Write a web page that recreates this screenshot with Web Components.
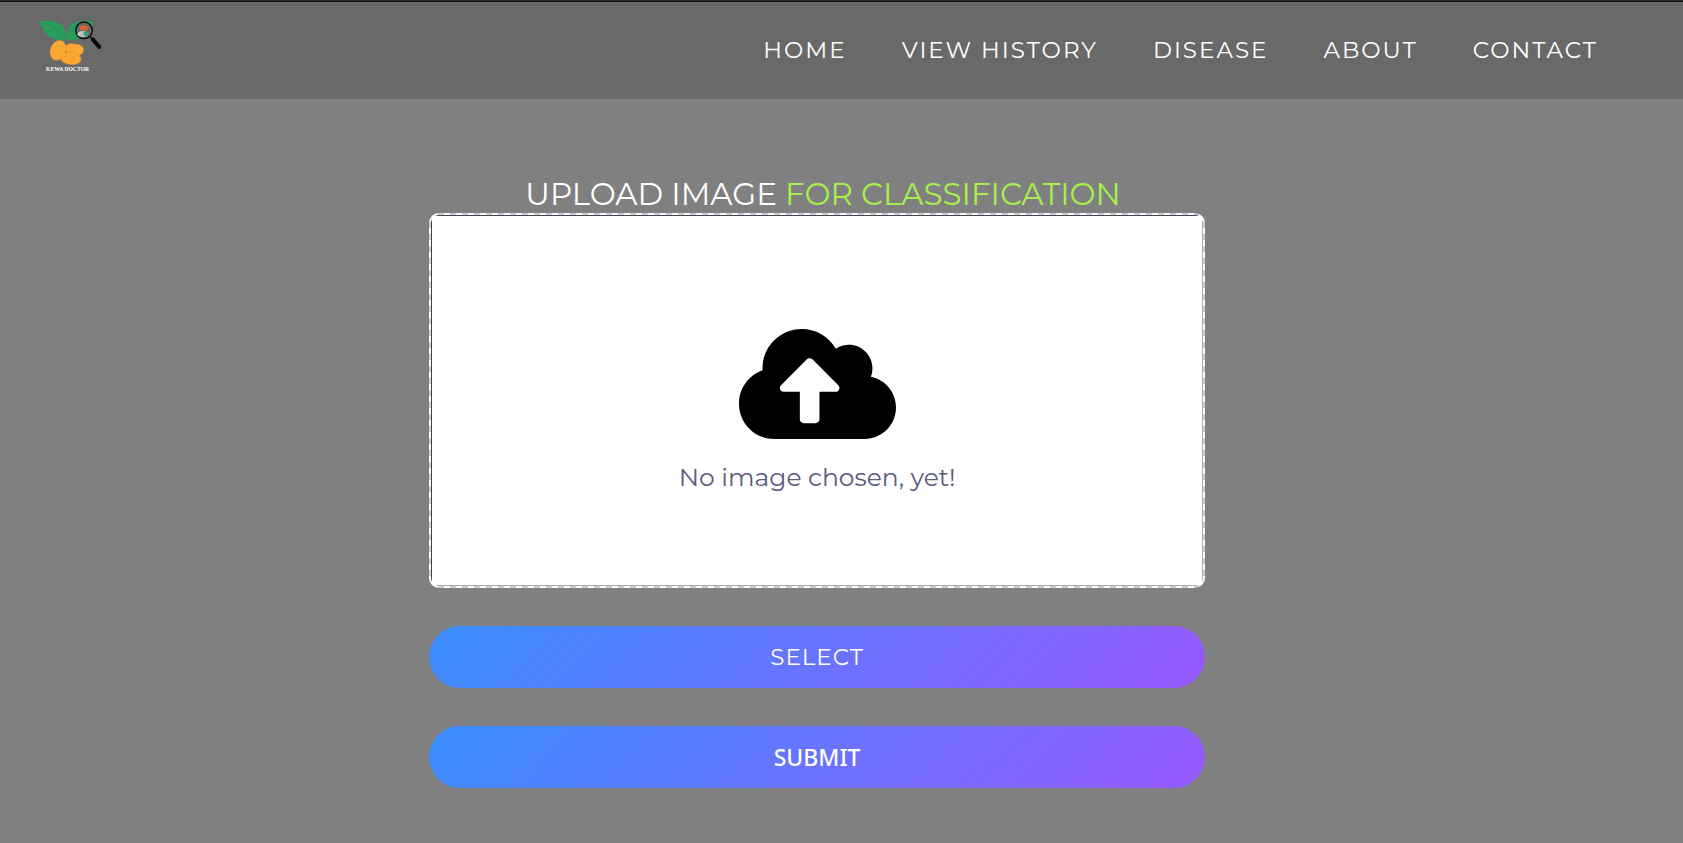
<!DOCTYPE html>
<html lang="en">
<head>
<meta charset="utf-8">
<meta name="viewport" content="width=device-width, initial-scale=1">
<title>Kewa Doctor</title>
<style>
html { background: #808080; }
body { margin: 0; font-family: Montserrat, Inter, sans-serif; }
</style>
</head>
<body>
<kewa-app></kewa-app>

<template id="app-template">
  <style>
    :host { display: flex; flex-direction: column; min-height: 100vh; background: #808080; }
    main { width: 46.1%; min-width: 320px; margin-inline: 25.5% auto; padding: 76px 0 55px; box-sizing: border-box;
      display: flex; flex-direction: column; gap: 38px; }
    .group { display: flex; flex-direction: column; }
    h1 { margin: 0; padding-left: 12px; font-size: 31px; font-weight: 400; line-height: 38px; text-align: center; color: #fff; }
    h1 span { color: #a6f04d; }
    .tahoma { font-family: Tahoma, "Noto Sans", sans-serif; font-weight: 500; letter-spacing: 0; }
  </style>
  <site-header>
    <nav-link href="#home">HOME</nav-link>
    <nav-link href="#history">VIEW HISTORY</nav-link>
    <nav-link href="#disease">DISEASE</nav-link>
    <nav-link href="#about">ABOUT</nav-link>
    <nav-link href="#contact">CONTACT</nav-link>
  </site-header>
  <main>
    <div class="group">
      <h1>UPLOAD IMAGE <span>FOR CLASSIFICATION</span></h1>
      <image-preview>No image chosen, yet!</image-preview>
    </div>
    <pill-button>SELECT</pill-button>
    <pill-button class="tahoma">SUBMIT</pill-button>
  </main>
</template>

<template id="header-template">
  <style>
    :host { display: flex; align-items: flex-start; justify-content: space-between; box-sizing: border-box;
      min-height: 99px; padding: 9px 85px 0 30px; border-top: 1px solid #2b2b35; box-shadow: inset 0 1px #0c0c10; background: #696969; }
    nav { display: flex; flex-wrap: wrap; gap: 55px; padding-top: 24px; }
  </style>
  <kewa-logo></kewa-logo>
  <nav aria-label="Main"><slot></slot></nav>
</template>

<template id="link-template">
  <style>
    :host { display: block; }
    a { color: #fff; text-decoration: none; font-size: 23px; line-height: 32px; letter-spacing: 2px; white-space: nowrap; }
  </style>
  <a><slot></slot></a>
</template>

<template id="logo-template">
  <style>
    :host { display: block; }
    svg { display: block; }
  </style>
  <svg width="80" height="70" viewBox="0 0 240 210" role="img" aria-label="Kewa Doctor">
    <path d="M24 36C50 30 90 32 101 52C107 62 108 76 107 91C85 91 62 88 50 73C40 61 38 47 24 36Z" fill="#24a05c"/>
    <path d="M109 91C107 63 116 41 144 35C164 32 178 32 192 36C180 45 179 66 166 76C152 88 131 91 109 91Z" fill="#24a05c"/>
    <path d="M34 40C66 43 94 62 107 93C112 72 122 56 140 47" fill="none" stroke="#4b7d5d" stroke-width="3"/>
    <rect x="106" y="102" width="55" height="32" rx="16" transform="rotate(9 133 118)" fill="#f9a735" stroke="#d18b32"/>
    <ellipse cx="84" cy="121" rx="23" ry="31" transform="rotate(22 84 121)" fill="#fba833" stroke="#d18b32"/>
    <ellipse cx="122" cy="145" rx="32" ry="19" transform="rotate(7 122 145)" fill="#fba833" stroke="#c98632"/>
    <circle cx="162" cy="61" r="25" fill="#686968" stroke="#090909" stroke-width="4"/>
    <rect x="149" y="47" width="25" height="14" rx="6" transform="rotate(5 161 54)" fill="#d86530"/>
    <ellipse cx="158" cy="72" rx="16" ry="9" fill="#b9c9bd"/>
    <circle cx="167" cy="71" r="7" fill="#31a475"/>
    <path d="M180 80L190 89" stroke="#111" stroke-width="5"/>
    <path d="M189 89L208 111" stroke="#080808" stroke-width="12" stroke-linecap="round"/>
    <text x="48" y="184" font-family="Liberation Serif, serif" font-size="17" font-weight="700" fill="#fff">KEWA DOCTOR</text>
  </svg>
</template>

<template id="preview-template">
  <style>
    :host {
      --dash: #c2cdda 0 3px, #fff 3px 9px, #c2cdda 9px 12px;
      display: block; box-sizing: border-box; height: 375px; padding: 2px; border-radius: 10px; overflow: hidden;
      background:
        repeating-linear-gradient(90deg, var(--dash)) top / 100% 2px no-repeat,
        repeating-linear-gradient(90deg, var(--dash)) bottom / 100% 2px no-repeat,
        repeating-linear-gradient(180deg, var(--dash)) left / 2px 100% no-repeat,
        repeating-linear-gradient(180deg, var(--dash)) right / 2px 100% no-repeat,
        #fff;
    }
    .clip { height: 100%; border-radius: 8px; overflow: hidden; }
    .frame { box-sizing: border-box; height: 100%; border: 1px solid; border-color: #45454c #aaa #aaa #45454c;
      display: flex; flex-direction: column; align-items: center; padding-top: 105px; gap: 14px; }
    p { margin: 0; font-size: 25px; line-height: 32px; font-weight: 400; color: #5b5b7b; }
    svg { display: block; }
  </style>
  <div class="clip"><div class="frame">
    <svg width="157" height="126" viewBox="0 0 640 512" aria-hidden="true">
      <path fill="#000" d="M537.6 226.6c4.1-10.7 6.4-22.4 6.4-34.6 0-53-43-96-96-96-19.7 0-38.1 6-53.3 16.2C367 64.2 315.3 32 256 32c-88.4 0-160 71.6-160 160 0 2.7.1 5.4.2 8.1C40.2 219.8 0 273.2 0 336c0 79.5 64.5 144 144 144h368c70.7 0 128-57.3 128-128 0-61.9-44-113.6-102.4-125.4zM393.4 288H328v112c0 8.8-7.2 16-16 16h-48c-8.8 0-16-7.2-16-16V288h-65.4c-14.3 0-21.4-17.2-11.3-27.4l105.4-105.4c6.2-6.2 16.4-6.2 22.6 0l105.4 105.4c10.1 10.1 2.9 27.4-11.3 27.4z"/>
    </svg>
    <p><slot></slot></p>
  </div></div>
</template>

<template id="button-template">
  <style>
    :host { display: block; letter-spacing: 1px; }
    button { display: block; width: 100%; height: 62px; padding: 0; border: 0; border-radius: 31px; color: #fff; cursor: pointer;
      font-family: inherit; font-size: 23px; font-weight: inherit; line-height: 30px; letter-spacing: inherit;
      background: linear-gradient(135deg, #3a8ffe 0%, #9658fe 100%); }
  </style>
  <button type="button"><slot></slot></button>
</template>

<script>
class TemplateElement extends HTMLElement {
  constructor() {
    super();
    const template = document.getElementById(this.constructor.template);
    this.attachShadow({ mode: "open" }).append(template.content.cloneNode(true));
  }
}
customElements.define("kewa-logo", class extends TemplateElement { static template = "logo-template"; });
customElements.define("nav-link", class extends TemplateElement {
  static template = "link-template";
  connectedCallback() { this.shadowRoot.querySelector("a").href = this.getAttribute("href"); }
});
customElements.define("site-header", class extends TemplateElement { static template = "header-template"; });
customElements.define("image-preview", class extends TemplateElement { static template = "preview-template"; });
customElements.define("pill-button", class extends TemplateElement { static template = "button-template"; });
customElements.define("kewa-app", class extends TemplateElement { static template = "app-template"; });
</script>
</body>
</html>
